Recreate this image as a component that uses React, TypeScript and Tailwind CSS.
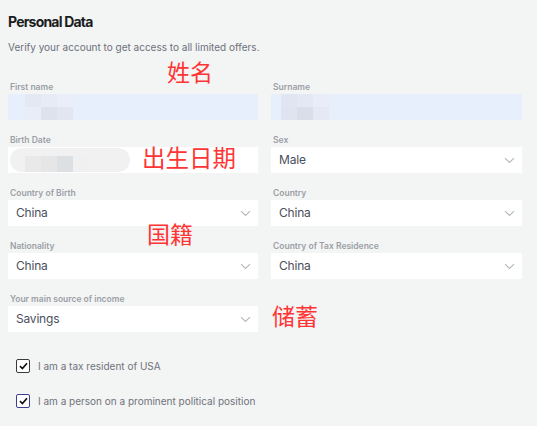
import React from "react";

const FONT = { fontFamily: "Inter, 'Noto Sans', sans-serif" };
const CJK = { fontFamily: "'Noto Sans CJK SC', sans-serif" };

function Chevron() {
  return (
    <svg width="11" height="7" viewBox="0 0 11 7" className="shrink-0">
      <path d="M1 1.2 5.5 5.5 10 1.2" fill="none" stroke="#b3b7bd" strokeWidth="1.1" />
    </svg>
  );
}

function Label({ children }: { children: React.ReactNode }) {
  return <div className="h-[12px] pl-[2px] text-[8.5px] font-semibold leading-[12px] text-[#9b9fa6]">{children}</div>;
}

function Select({ label, value }: { label: string; value: string }) {
  return (
    <div>
      <Label>{label}</Label>
      <div className="mt-px flex h-[26px] items-center justify-between bg-white pl-[8px] pr-[7px]">
        <span className="text-[12px] tracking-[-0.2px] text-[#4a4f5c]">{value}</span>
        <Chevron />
      </div>
    </div>
  );
}

function Blocks({ colors }: { colors: string[][] }) {
  return (
    <div className="flex flex-col blur-[0.6px]">
      {colors.map((row, i) => (
        <div key={i} className="flex">
          {row.map((c, j) => (
            <div key={j} className="h-[13px] w-[16px]" style={{ background: c }} />
          ))}
        </div>
      ))}
    </div>
  );
}

function Check({ tone }: { tone: string }) {
  return (
    <div className={`flex h-[14px] w-[14px] items-center justify-center rounded-[2px] border-[1.5px] bg-white ${tone}`}>
      <svg width="9" height="8" viewBox="0 0 9 8">
        <path d="M1 4.2 3.4 6.5 8 1.3" fill="none" stroke="#111" strokeWidth="1.7" />
      </svg>
    </div>
  );
}

export default function App() {
  return (
    <div className="relative h-[426px] w-[537px] overflow-hidden bg-[#f3f4f4]" style={FONT}>
      <div className="pl-[8px] pt-[13px]">
        <div className="text-[14px] font-bold leading-[18px] tracking-[-0.8px] text-[#1b1d21]">Personal Data</div>
        <div className="mt-[9px] text-[10px] leading-[14px] text-[#6d717a]">
          Verify your account to get access to all limited offers.
        </div>
      </div>

      <div className="mt-[27px] grid grid-cols-[250px_251px] gap-x-[13px] gap-y-[14px] pl-[8px]">
        <div>
          <Label>First name</Label>
          <div className="mt-px flex h-[26px] items-center bg-[#e8effc] pl-[17px]">
            <Blocks
              colors={[
                ["#e3e8f3", "#e6ebf6", "#e9eefa"],
                ["#e8edf8", "#dde2ed", "#e1e6f1"],
              ]}
            />
          </div>
        </div>
        <div>
          <Label>Surname</Label>
          <div className="mt-px flex h-[26px] items-center bg-[#e8effc] pl-[10px]">
            <Blocks
              colors={[
                ["#e0e5f1", "#e3e8f4", "#e8edf9"],
                ["#dfe4f0", "#d9dee9", "#e4e9f5"],
              ]}
            />
          </div>
        </div>

        <div>
          <Label>Birth Date</Label>
          <div className="mt-px flex h-[26px] items-center bg-white pl-[2px]">
            <div className="flex h-[24px] w-[120px] items-end overflow-hidden rounded-full bg-[#f1f1f1] pl-[15px]">
              <div className="flex blur-[0.5px]">
                <div className="h-[16px] w-[16px] bg-[#e9e9e9]" />
                <div className="h-[16px] w-[16px] bg-[#e6e6e6]" />
                <div className="h-[16px] w-[16px] bg-[#dde0e3]" />
                <div className="h-[16px] w-[16px] bg-[#f0f0f0]" />
              </div>
            </div>
          </div>
        </div>
        <Select label="Sex" value="Male" />

        <Select label="Country of Birth" value="China" />
        <Select label="Country" value="China" />

        <Select label="Nationality" value="China" />
        <Select label="Country of Tax Residence" value="China" />

        <Select label="Your main source of income" value="Savings" />
      </div>

      <div className="mt-[27px] flex flex-col gap-[21px] pl-[16px]">
        <div className="flex h-[14px] items-center gap-[8px]">
          <Check tone="border-[#3a3a3a]" />
          <span className="text-[10px] text-[#6f737b]">I am a tax resident of USA</span>
        </div>
        <div className="flex h-[14px] items-center gap-[8px]">
          <Check tone="border-[#3b3f96]" />
          <span className="text-[10px] text-[#6f737b]">I am a person on a prominent political position</span>
        </div>
      </div>

      <div className="absolute left-[167px] top-[59px] text-[23px] leading-[24px] text-[#ff3535]" style={CJK}>姓名</div>
      <div className="absolute left-[142px] top-[145px] text-[23.5px] leading-[24px] text-[#ff3535]" style={CJK}>出生日期</div>
      <div className="absolute left-[147px] top-[221px] text-[23px] leading-[24px] text-[#ff3535]" style={CJK}>国籍</div>
      <div className="absolute left-[272px] top-[303px] text-[23px] leading-[24px] text-[#ff3535]" style={CJK}>储蓄</div>
    </div>
  );
}
